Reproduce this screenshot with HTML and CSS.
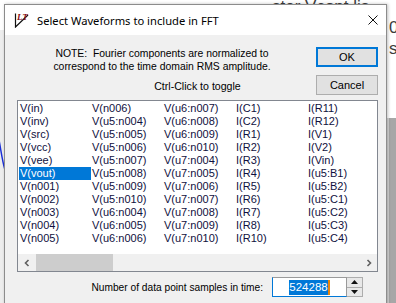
FILE: index.html
```html
<!DOCTYPE html>
<html lang="en">

<head>
    <meta charset="UTF-8">
    <title>Select Waveforms to include in FFT</title>
    <link rel="stylesheet" href="styles.css">
</head>

<body>
    <div class="desk">
        <!-- netlist window behind the dialog -->
        <div class="behind">
            <div class="behind-line">ster Vcont lis</div>
            <div class="behind-line edge">0</div>
            <div class="behind-line edge">s</div>
        </div>
        <div class="left-shade"></div>
        <svg class="trace" width="8" height="40" viewBox="0 0 8 40">
            <path d="M0 0 C2 10 3 20 6 30" fill="none" stroke="#1a2fd8" stroke-width="1.5"/>
        </svg>
        <div class="side-shade"></div>

        <div class="dialog">
            <div class="titlebar">
                <svg class="app-icon" width="16" height="16" viewBox="0 0 16 16">
                    <path d="M1.5 1.5 V15 L14 3" fill="none" stroke="#111" stroke-width="1.2"/>
                    <text x="3" y="8" font-family="Liberation Serif, serif" font-style="italic" font-weight="bold" font-size="9" fill="#8a1010">LT</text>
                </svg>
                <span class="title">Select Waveforms to include in FFT</span>
                <svg class="close" width="10" height="10" viewBox="0 0 10 10">
                    <path d="M0.5 0.5 L9.5 9.5 M9.5 0.5 L0.5 9.5" stroke="#111" stroke-width="1"/>
                </svg>
            </div>

            <div class="client">
                <div class="head">
                    <div class="note">NOTE:&nbsp; Fourier components are normalized to<br>correspond to the time domain RMS amplitude.</div>
                    <button class="btn btn-default">OK</button>
                    <div class="hint">Ctrl-Click to toggle</div>
                    <button class="btn btn-cancel">Cancel</button>
                </div>

                <div class="listbox">
                    <div class="items" id="items"></div>
                    <div class="hscroll">
                        <span class="arrow">
                            <svg width="8" height="8" viewBox="0 0 8 8"><path d="M5.5 1 L2.5 4 L5.5 7" fill="none" stroke="#606060" stroke-width="1.6"/></svg>
                        </span>
                        <span class="thumb"></span>
                        <span class="track"></span>
                        <span class="arrow">
                            <svg width="8" height="8" viewBox="0 0 8 8"><path d="M2.5 1 L5.5 4 L2.5 7" fill="none" stroke="#606060" stroke-width="1.6"/></svg>
                        </span>
                    </div>
                </div>

                <div class="samples">
                    <span class="samples-label">Number of data point samples in time:</span>
                    <div class="edit"><span class="sel">524288</span><span class="caret"></span></div>
                    <div class="spin">
                        <span class="spin-btn"><svg width="7" height="4" viewBox="0 0 7 4"><path d="M3.5 0 L7 4 L0 4 Z" fill="#111"/></svg></span>
                        <span class="spin-btn"><svg width="7" height="4" viewBox="0 0 7 4"><path d="M0 0 L7 0 L3.5 4 Z" fill="#111"/></svg></span>
                    </div>
                </div>
            </div>
        </div>
    </div>

    <script>
        const traces = [
            'V(in)', 'V(inv)', 'V(src)', 'V(vcc)', 'V(vee)', 'V(vout)', 'V(n001)', 'V(n002)', 'V(n003)', 'V(n004)', 'V(n005)',
            'V(n006)', 'V(u5:n004)', 'V(u5:n005)', 'V(u5:n006)', 'V(u5:n007)', 'V(u5:n008)', 'V(u5:n009)', 'V(u5:n010)', 'V(u6:n004)', 'V(u6:n005)', 'V(u6:n006)',
            'V(u6:n007)', 'V(u6:n008)', 'V(u6:n009)', 'V(u6:n010)', 'V(u7:n004)', 'V(u7:n005)', 'V(u7:n006)', 'V(u7:n007)', 'V(u7:n008)', 'V(u7:n009)', 'V(u7:n010)',
            'I(C1)', 'I(C2)', 'I(R1)', 'I(R2)', 'I(R3)', 'I(R4)', 'I(R5)', 'I(R6)', 'I(R7)', 'I(R8)', 'I(R10)',
            'I(R11)', 'I(R12)', 'I(V1)', 'I(V2)', 'I(Vin)', 'I(u5:B1)', 'I(u5:B2)', 'I(u5:C1)', 'I(u5:C2)', 'I(u5:C3)', 'I(u5:C4)'
        ];
        const selected = ['V(vout)'];

        const box = document.getElementById('items');
        traces.forEach(name => {
            const div = document.createElement('div');
            div.className = 'item' + (selected.includes(name) ? ' selected' : '');
            div.textContent = name;
            box.appendChild(div);
        });
    </script>
</body>

</html>
```

FILE: styles.css
```css
body {
    margin: 0;
    background: #ffffff;
    font-family: 'Liberation Sans', Arial, sans-serif;
    font-size: 11px;
    color: #000;
    overflow: hidden;
}

.desk {
    position: relative;
    width: 396px;
    height: 303px;
    overflow: hidden;
    padding: 4px 0 0 4px;
    box-sizing: border-box;
}

/* stuff behind the dialog */
.behind {
    position: absolute;
    left: 272px;
    top: -4px;
    color: #3c3c3c;
    font-family: 'Liberation Sans', Arial, sans-serif;
    font-size: 17px;
    line-height: 21px;
    white-space: nowrap;
}

.behind-line.edge {
    margin-left: 117px;
}

.left-shade {
    position: absolute;
    left: 0;
    top: 30px;
    width: 4px;
    bottom: 0;
    background: #ededed;
}

.trace {
    position: absolute;
    left: -1px;
    top: 140px;
}

.side-shade {
    position: absolute;
    right: 0;
    top: 118px;
    width: 7px;
    bottom: 0;
    background: #a7a7a7;
    border-left: 2px solid #d4d4d4;
}

.dialog {
    position: relative;
    width: 383px;
    height: 320px;
    box-sizing: border-box;
    border: 1px solid #8c8c8c;
    background: #f0f0f0;
    box-shadow: 1px 0 3px rgba(0, 0, 0, 0.25);
}

.titlebar {
    height: 30px;
    background: #fff;
    display: flex;
    align-items: center;
    padding-left: 9px;
}

.app-icon {
    flex: none;
}

.title {
    font-family: 'Segoe UI', 'Noto Sans', sans-serif;
    font-size: 11.2px;
    margin-left: 7px;
    color: #000;
}

.close {
    margin-left: auto;
    margin-right: 8px;
}

.client {
    padding: 12px 8px 0 12px;
}

/* note + buttons */
.head {
    display: grid;
    grid-template-columns: 290px 1fr 62px;
    grid-template-rows: 20px 20px;
    row-gap: 8px;
}

.note {
    grid-column: 1;
    grid-row: 1;
    text-align: center;
    line-height: 13px;
    white-space: nowrap;
    font-size: 10.4px;
}

.hint {
    grid-column: 1 / -1;
    grid-row: 2;
    text-align: center;
    align-self: center;
    padding-top: 2px;
    font-size: 10.6px;
}

.btn {
    font-family: 'Liberation Sans', Arial, sans-serif;
    font-size: 11px;
    height: 20px;
    width: 62px;
    padding: 0;
    background: #e1e1e1;
    color: #000;
    border: 1px solid #adadad;
    box-sizing: border-box;
}

.btn-default {
    grid-column: 3;
    grid-row: 1;
    border: 2px solid #0078d7;
}

.btn-cancel {
    grid-column: 3;
    grid-row: 2;
}

/* trace list */
.listbox {
    margin-top: 5px;
    width: 361px;
    height: 172px;
    box-sizing: border-box;
    border: 1px solid #828790;
    background: #fff;
    display: flex;
    flex-direction: column;
}

.items {
    flex: 1;
    display: grid;
    grid-template-rows: repeat(11, 13px);
    grid-auto-flow: column;
    grid-auto-columns: 72px;
    padding: 1px 0 0 1px;
    overflow: hidden;
}

.item {
    line-height: 13px;
    padding-left: 1px;
    white-space: nowrap;
    color: #101040;
}

.item.selected {
    background: #0078d7;
    color: #fff;
}

.hscroll {
    height: 17px;
    display: flex;
    background: #f0f0f0;
}

.arrow {
    width: 17px;
    display: flex;
    align-items: center;
    justify-content: center;
}

.thumb {
    width: 77px;
    margin-left: 1px;
    background: #cdcdcd;
}

.track {
    flex: 1;
}

/* sample count */
.samples {
    display: flex;
    align-items: center;
    margin-top: 5px;
    padding-left: 73px;
}

.samples-label {
    width: 173px;
    margin-right: 9px;
    text-align: right;
    white-space: nowrap;
    font-size: 10.2px;
}

.edit {
    width: 75px;
    height: 20px;
    box-sizing: border-box;
    border: 1px solid #0078d7;
    border-top-color: #9a9a9a;
    border-right-color: #9a9a9a;
    background: #fff;
    display: flex;
    align-items: center;
    justify-content: center;
    font-size: 11.5px;
}

.sel {
    background: #0078d7;
    color: #fff;
    line-height: 15px;
}

.caret {
    width: 2px;
    height: 15px;
    background: #e8840c;
}

.spin {
    width: 16px;
    height: 20px;
    box-sizing: border-box;
    border: 1px solid #adadad;
    border-left: none;
    display: flex;
    flex-direction: column;
    background: #e8e8e8;
}

.spin-btn {
    flex: 1;
    display: flex;
    align-items: center;
    justify-content: center;
}

.spin-btn + .spin-btn {
    border-top: 1px solid #adadad;
}
```
